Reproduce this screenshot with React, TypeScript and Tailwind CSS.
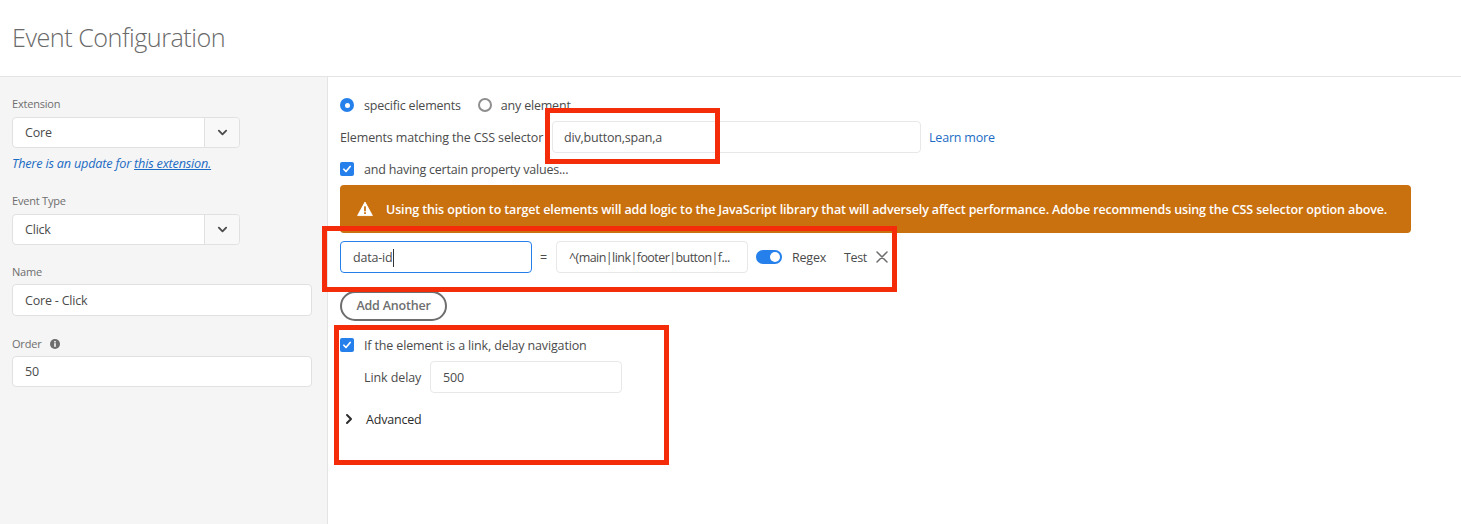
import React from "react";

function Chevron({ className = "" }: { className?: string }) {
  return (
    <svg viewBox="0 0 12 12" className={className} fill="none" stroke="currentColor" strokeWidth="2" strokeLinecap="round" strokeLinejoin="round">
      <path d="M2 4l4 4 4-4" />
    </svg>
  );
}

function Check() {
  return (
    <span className="flex h-[14px] w-[14px] shrink-0 items-center justify-center rounded-[2px] bg-[#2680eb]">
      <svg viewBox="0 0 12 12" className="h-[10px] w-[10px]" fill="none" stroke="#fff" strokeWidth="2" strokeLinecap="round" strokeLinejoin="round">
        <path d="M2.2 6.3l2.6 2.7 5-6" />
      </svg>
    </span>
  );
}

function Label({ children }: { children: React.ReactNode }) {
  return <div className="h-[13px] text-[11px] leading-[13px] text-[#6e6e6e]">{children}</div>;
}

function Select({ value, className = "" }: { value: string; className?: string }) {
  return (
    <div className={`flex h-[31px] w-[228px] rounded-[4px] border border-[#e1e1e1] bg-white text-[#4b4b4b] ${className}`}>
      <div className="flex flex-1 items-center pl-3 pt-[2px] text-[12.5px]">{value}</div>
      <div className="flex w-[35px] items-center justify-center rounded-r-[4px] border-l border-[#e1e1e1] bg-[#f8f8f8]">
        <Chevron className="h-[11px] w-[11px] text-[#4b4b4b]" />
      </div>
    </div>
  );
}

function Field({ value, className = "" }: { value: React.ReactNode; className?: string }) {
  return (
    <div className={`flex items-center truncate rounded-[4px] border bg-white pt-[2px] text-[12.5px] text-[#4b4b4b] ${className}`}>
      {value}
    </div>
  );
}

function Marker({ className }: { className: string }) {
  return <div className={`pointer-events-none absolute border-[5px] border-[#f42c0a] ${className}`} />;
}

export default function App() {
  return (
    <div className="relative h-[524px] w-full overflow-hidden bg-white font-['Open_Sans',sans-serif] tracking-[-0.2px]">
      <header className="flex h-[77px] items-start border-b border-[#e4e4e4] pl-3 pt-[19px]">
        <h1 className="text-[25.2px] font-light leading-[36px] tracking-[-0.5px] text-[#6a6a6a]">Event Configuration</h1>
      </header>
      <div className="flex h-[447px]">
        <aside className="w-[328px] shrink-0 border-r border-[#e4e4e4] bg-[#f5f5f5] pl-3 pt-[20px]">
          <Label>Extension</Label>
          <Select value="Core" className="mt-[7px]" />
          <p className="mt-[7px] h-[16px] text-[12.7px] italic leading-[16px] text-[#1c6cc4]">
            There is an update for <span className="underline">this extension.</span>
          </p>
          <div className="mt-[23px]">
            <Label>Event Type</Label>
          </div>
          <Select value="Click" className="mt-[7px]" />
          <div className="mt-[20px]">
            <Label>Name</Label>
          </div>
          <Field value="Core - Click" className="mt-[6px] h-[32px] w-[300px] border-[#e1e1e1] pl-3" />
          <div className="mt-[21px] flex items-center gap-[9px]">
            <Label>Order</Label>
            <svg viewBox="0 0 12 12" className="h-[10px] w-[10px]">
              <circle cx="6" cy="6" r="6" fill="#6e6e6e" />
              <rect x="5" y="5" width="2" height="4.4" fill="#f5f5f5" />
              <rect x="5" y="2.4" width="2" height="1.8" fill="#f5f5f5" />
            </svg>
          </div>
          <Field value="50" className="mt-[6px] h-[31px] w-[300px] border-[#e1e1e1] pl-3" />
        </aside>
        <main className="flex-1 pl-3 pr-[50px] pt-[20px] text-[12.5px] text-[#4b4b4b]">
          <div className="flex h-[16px] items-center">
            <span className="flex h-[14px] w-[14px] items-center justify-center rounded-full bg-[#2680eb]">
              <span className="h-[5px] w-[5px] rounded-full bg-white" />
            </span>
            <span className="ml-[10px] pt-[2px]">specific elements</span>
            <span className="ml-[17px] h-[14px] w-[14px] rounded-full border-2 border-[#8e8e8e]" />
            <span className="ml-[9px] pt-[2px]">any element</span>
          </div>
          <div className="mt-[8px] flex h-[32px] items-center">
            <span className="w-[212px] shrink-0 pt-[2px] tracking-[-0.14px]">Elements matching the CSS selector</span>
            <Field value="div,button,span,a" className="h-[32px] w-[369px] border-[#e8e8e8] pl-[11px]" />
            <a className="ml-[8px] pt-[2px] text-[#1c6cc4]">Learn more</a>
          </div>
          <div className="mt-[8px] flex h-[16px] items-center gap-[10px]">
            <Check />
            <span className="pt-[2px]">and having certain property values...</span>
          </div>
          <div className="mt-[8px] flex h-[48px] items-center gap-[13px] rounded-[4px] bg-[#c9700f] pl-[17px] text-[12.5px] font-semibold text-white">
            <svg viewBox="0 0 18 18" className="h-[16px] w-[16px] shrink-0">
              <path d="M9 1.2L17.3 16.4H.7z" fill="#fff" stroke="#fff" strokeLinejoin="round" />
              <rect x="8" y="6" width="2" height="5.6" fill="#c9700f" />
              <rect x="8" y="12.6" width="2" height="2" fill="#c9700f" />
            </svg>
            <span className="pt-[2px] tracking-[-0.137px]">Using this option to target elements will add logic to the JavaScript library that will adversely affect performance. Adobe recommends using the CSS selector option above.</span>
          </div>
          <div className="mt-[8px] flex h-[32px] items-center">
            <Field
              value={<>data-id<span className="ml-px inline-block h-[18px] w-px bg-[#333]" /></>}
              className="h-[32px] w-[192px] border-[#2680eb] pl-3"
            />
            <span className="w-[24px] pr-[1px] pt-[2px] text-center">=</span>
            <Field value="^(main|link|footer|button|f..." className="h-[32px] w-[192px] border-[#e8e8e8] pl-3 tracking-[-0.56px]" />
            <span className="ml-2 flex h-[14px] w-[26px] items-center justify-end rounded-full bg-[#2680eb] pr-[2px]">
              <span className="h-[10px] w-[10px] rounded-full bg-white" />
            </span>
            <span className="ml-[10px] pt-[2px]">Regex</span>
            <span className="ml-[18px] pt-[2px] tracking-[-0.4px]">Test</span>
            <svg viewBox="0 0 12 12" className="ml-[9px] h-[12px] w-[12px]" stroke="#6e6e6e" strokeWidth="1.5" strokeLinecap="round">
              <path d="M1 1l10 10M11 1L1 11" />
            </svg>
          </div>
          <button className="mt-[18px] flex h-[30px] w-[107px] items-center justify-center rounded-full border-2 border-[#6e6e6e] text-[12.5px] font-semibold text-[#6e6e6e]">
            Add Another
          </button>
          <div className="mt-[16px] flex h-[16px] items-center gap-[10px]">
            <Check />
            <span className="pt-[2px] tracking-[-0.15px]">If the element is a link, delay navigation</span>
          </div>
          <div className="mt-[8px] flex h-[32px] items-center pl-[24px]">
            <span className="w-[66px] shrink-0 pt-[2px] tracking-[-0.1px]">Link delay</span>
            <Field value="500" className="h-[32px] w-[192px] border-[#e8e8e8] pl-3" />
          </div>
          <div className="mt-[18px] flex h-[16px] items-center">
            <Chevron className="ml-[3px] h-[12px] w-[12px] -rotate-90 text-[#2c2c2c]" />
            <span className="ml-[11px] pt-[2px] text-[#2c2c2c]">Advanced</span>
          </div>
        </main>
      </div>
      <Marker className="left-[545px] top-[108px] h-[56px] w-[175px]" />
      <Marker className="left-[322px] top-[226px] h-[66px] w-[575px]" />
      <Marker className="left-[334px] top-[325px] h-[140px] w-[335px]" />
    </div>
  );
}
